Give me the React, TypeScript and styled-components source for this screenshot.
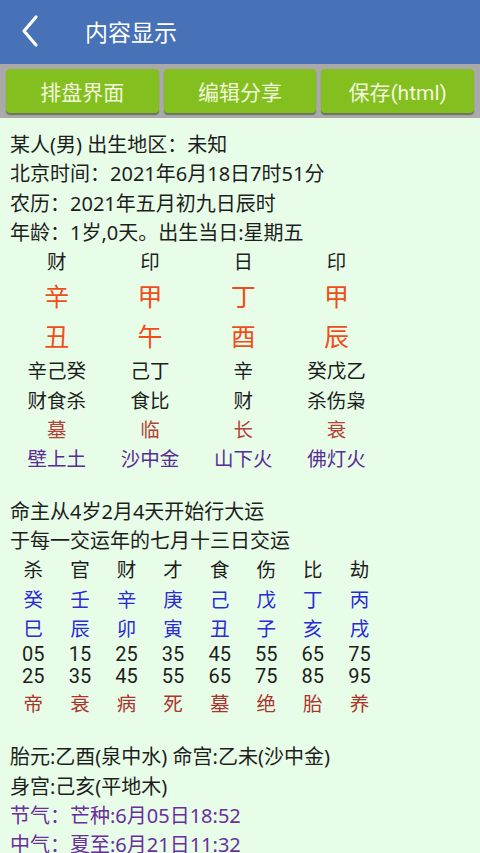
import React from 'react';
import styled, { createGlobalStyle } from 'styled-components';

const GlobalStyle = createGlobalStyle`
  html, body {
    margin: 0;
    padding: 0;
    background: #e8fde8;
  }
  body {
    font-family: "Noto Sans", "Noto Sans CJK SC", sans-serif;
  }
`;

const pillars = [
  { god: '财', stem: '辛', branch: '丑', hidden: '辛己癸', hiddenGods: '财食杀', stage: '墓', nayin: '壁上土' },
  { god: '印', stem: '甲', branch: '午', hidden: '己丁', hiddenGods: '食比', stage: '临', nayin: '沙中金' },
  { god: '日', stem: '丁', branch: '酉', hidden: '辛', hiddenGods: '财', stage: '长', nayin: '山下火' },
  { god: '印', stem: '甲', branch: '辰', hidden: '癸戊乙', hiddenGods: '杀伤枭', stage: '衰', nayin: '佛灯火' },
];

const luck = [
  { god: '杀', stem: '癸', branch: '巳', from: '05', to: '25', stage: '帝' },
  { god: '官', stem: '壬', branch: '辰', from: '15', to: '35', stage: '衰' },
  { god: '财', stem: '辛', branch: '卯', from: '25', to: '45', stage: '病' },
  { god: '才', stem: '庚', branch: '寅', from: '35', to: '55', stage: '死' },
  { god: '食', stem: '己', branch: '丑', from: '45', to: '65', stage: '墓' },
  { god: '伤', stem: '戊', branch: '子', from: '55', to: '75', stage: '绝' },
  { god: '比', stem: '丁', branch: '亥', from: '65', to: '85', stage: '胎' },
  { god: '劫', stem: '丙', branch: '戌', from: '75', to: '95', stage: '养' },
];

const App = () => {
  return (
    <Page>
      <GlobalStyle />
      <Header>
        <BackButton aria-label="back">
          <svg width="22" height="34" viewBox="0 0 22 34">
            <path d="M17 3 L5 17 L17 31" fill="none" stroke="#fff" strokeWidth="3.2" strokeLinecap="round" strokeLinejoin="round" />
          </svg>
        </BackButton>
        <Title>内容显示</Title>
      </Header>
      <Toolbar>
        <ActionButton>排盘界面</ActionButton>
        <ActionButton>编辑分享</ActionButton>
        <ActionButton>保存(html)</ActionButton>
      </Toolbar>
      <Content>
        <Line>某人(男) 出生地区：未知</Line>
        <Line>北京时间：2021年6月18日7时51分</Line>
        <Line>农历：2021年五月初九日辰时</Line>
        <Line>年龄：1岁,0天。出生当日:星期五</Line>

        <PillarGrid>
          {pillars.map((p, i) => (
            <Column key={i}>
              <Cell>{p.god}</Cell>
              <BigCell>{p.stem}</BigCell>
              <BigCell>{p.branch}</BigCell>
              <Cell>{p.hidden}</Cell>
              <Cell>{p.hiddenGods}</Cell>
              <Cell $color="#b3423a">{p.stage}</Cell>
              <Cell $color="#582c94">{p.nayin}</Cell>
            </Column>
          ))}
        </PillarGrid>

        <Section $gap={23}>
          <Line>命主从4岁2月4天开始行大运</Line>
          <Line>于每一交运年的七月十三日交运</Line>
          <LuckGrid>
            {luck.map((l, i) => (
              <Column key={i}>
                <Cell>{l.god}</Cell>
                <Cell $color="#2a2ad6">{l.stem}</Cell>
                <Cell $color="#2a2ad6">{l.branch}</Cell>
                <NumCell>{l.from}</NumCell>
                <NumCell>{l.to}</NumCell>
                <StageCell>{l.stage}</StageCell>
              </Column>
            ))}
          </LuckGrid>
        </Section>

        <Section $gap={24}>
          <Line>胎元:乙酉(泉中水) 命宫:乙未(沙中金)</Line>
          <Line>身宫:己亥(平地木)</Line>
          <Line $color="#6a2e9e">节气：芒种:6月05日18:52</Line>
          <Line $color="#6a2e9e">中气：夏至:6月21日11:32</Line>
        </Section>
      </Content>
    </Page>
  );
};

const Page = styled.div`
  width: 480px;
  height: 853px;
  overflow: hidden;
  background: #e8fde8;
  color: #1e1e1e;
`;

const Header = styled.div`
  height: 64px;
  background: #4872b8;
  display: flex;
  align-items: center;
  padding-left: 19px;
  box-sizing: border-box;
`;

const BackButton = styled.div`
  width: 24px;
  height: 34px;
  display: flex;
  align-items: center;
  margin-top: -2px;
`;

const Title = styled.div`
  margin-left: 42px;
  color: #fff;
  font-size: 23px;
  font-family: "Noto Sans CJK SC", sans-serif;
  margin-top: -2px;
`;

const Toolbar = styled.div`
  height: 54px;
  background: #a9a9a9;
  display: grid;
  grid-template-columns: repeat(3, 1fr);
  gap: 5px;
  padding: 5px 6px 0;
  box-sizing: border-box;
`;

const ActionButton = styled.div`
  height: 44px;
  background: #84bf20;
  border-radius: 4px;
  box-shadow: 0 2px 1px rgba(60, 70, 40, 0.55);
  display: flex;
  align-items: center;
  justify-content: center;
  color: #f1f7da;
  font-size: 21px;
  font-family: Roboto, "Noto Sans CJK SC", sans-serif;
`;

const Content = styled.div`
  padding: 12px 0 0 10px;
`;

const Line = styled.div<{ $color?: string }>`
  font-size: 20px;
  line-height: 29.3px;
  height: 29.3px;
  white-space: nowrap;
  color: ${(p) => p.$color || '#1e1e1e'};
`;

const PillarGrid = styled.div`
  display: grid;
  grid-template-columns: repeat(4, 93.3px);
`;

const LuckGrid = styled.div`
  display: grid;
  grid-template-columns: repeat(8, 46.6px);
`;

const Section = styled.div<{ $gap: number }>`
  margin-top: ${(p) => p.$gap}px;
`;

const Column = styled.div`
  display: flex;
  flex-direction: column;
  align-items: center;
`;

const Cell = styled.div<{ $color?: string }>`
  font-size: 19.5px;
  line-height: 29.3px;
  height: 29.3px;
  white-space: nowrap;
  color: ${(p) => p.$color || '#1e1e1e'};
`;

const BigCell = styled.div`
  font-size: 25px;
  line-height: 40px;
  height: 40px;
  color: #f04d1a;
`;

const NumCell = styled.div`
  font-family: Roboto, sans-serif;
  font-size: 20px;
  line-height: 22px;
  height: 22px;
  color: #1e1e1e;
`;

const StageCell = styled.div`
  font-size: 19.5px;
  line-height: 29.3px;
  height: 29.3px;
  margin-top: 2px;
  color: #a8352f;
`;

export default App;
